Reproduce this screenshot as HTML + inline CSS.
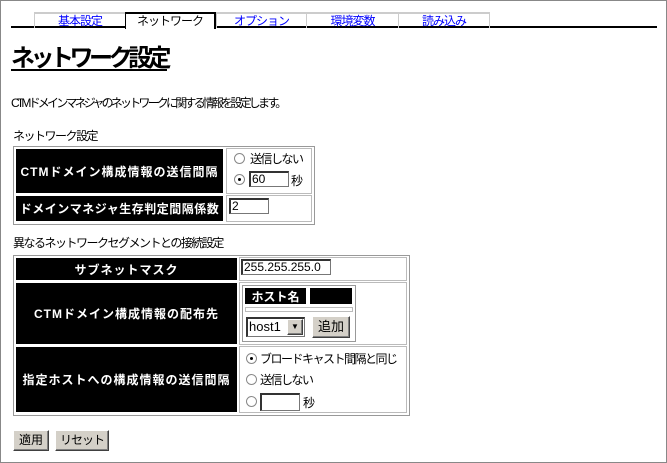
<!DOCTYPE html>
<html><head><meta charset="utf-8"><style>
body{margin:0;width:667px;height:463px;position:relative;background:#fff;font-family:"Liberation Sans","Noto Sans CJK JP",sans-serif;font-size:12px;color:#000;overflow:hidden}
.a{position:absolute}
.frame{left:0;top:0;width:665px;height:461px;border:1px solid #888}
.tab{position:absolute;top:12px;height:14px;border:1px solid #ccc;border-bottom:none;border-top:2px solid #ccc;text-align:center;font-size:12px;line-height:14px;color:#00f;letter-spacing:-1px}
.tab.act{border-top:2px solid #000;border-left:1px solid #000;border-right:2px solid #000;color:#000;height:15px;background:#fff}
.blk{position:absolute;background:#000;color:#fff;font-weight:bold;font-size:12px;display:flex;align-items:center;justify-content:center;white-space:nowrap}
.cell{position:absolute;border:1px solid #bbb}
.tbl{position:absolute;border:1px solid #999}
.inp{position:absolute;height:16px;border:1px solid #777;border-top:2px solid #333;border-left:2px solid #333;background:#fff;box-sizing:border-box;font-size:12px;line-height:13px;padding-left:1px}
.rad{position:absolute;width:9px;height:9px;border:1px solid #888;border-radius:50%;background:#fff}
.rad.on::after{content:"";position:absolute;left:3px;top:3px;width:3px;height:3px;background:#000;border-radius:50%}
.btn{position:absolute;background:#d4d0c8;border:1px solid;border-color:#fff #404040 #404040 #fff;box-shadow:inset -1px -1px #808080;font-size:12px;text-align:center;line-height:18px;box-sizing:border-box}
.t{position:absolute;white-space:nowrap;font-size:12px;line-height:14px;letter-spacing:-1.5px}
</style></head><body>
<div class="a frame"></div>
<div class="a" style="left:11px;top:26px;width:646px;height:2px;background:#000"></div>
<div class="tab" style="left:34px;width:90px">基本設定</div>
<div class="tab act" style="left:125px;width:88px">ネットワーク</div>
<div class="tab" style="left:216px;width:89px">オプション</div>
<div class="tab" style="left:306px;width:91px">環境変数</div>
<div class="tab" style="left:398px;width:90px">読み込み</div>
<div class="t" style="left:11px;top:44px;font-size:24px;line-height:30px;font-weight:bold;letter-spacing:-4.5px;text-decoration:underline;text-underline-offset:3px">ネットワーク設定</div>
<div class="t" style="left:11px;top:96px;letter-spacing:-2.8px">CTMドメインマネジャのネットワークに関する情報を設定します。</div>
<div class="t" style="left:13px;top:129px">ネットワーク設定</div>
<div class="tbl" style="left:13px;top:146px;width:300px;height:77px"></div>
<div class="blk" style="left:16px;top:149px;width:207px;height:44px;letter-spacing:1px">CTMドメイン構成情報の送信間隔</div>
<div class="cell" style="left:226px;top:148px;width:84px;height:44px"></div>
<div class="rad" style="left:234px;top:153px"></div><div class="t" style="left:250px;top:152px">送信しない</div>
<div class="rad on" style="left:234px;top:174px"></div><div class="inp" style="left:249px;top:171px;width:40px">60</div><div class="t" style="left:291px;top:174px">秒</div>
<div class="blk" style="left:16px;top:196px;width:207px;height:25px;letter-spacing:0.5px">ドメインマネジャ生存判定間隔係数</div>
<div class="cell" style="left:226px;top:195px;width:84px;height:25px"></div>
<div class="inp" style="left:229px;top:198px;width:40px">2</div>
<div class="t" style="left:13px;top:236px">異なるネットワークセグメントとの接続設定</div>
<div class="tbl" style="left:13px;top:255px;width:395px;height:159px"></div>
<div class="blk" style="left:16px;top:258px;width:221px;height:22px;letter-spacing:1px">サブネットマスク</div>
<div class="cell" style="left:239px;top:257px;width:166px;height:22px"></div>
<div class="inp" style="left:241px;top:259px;width:90px">255.255.255.0</div>
<div class="blk" style="left:16px;top:283px;width:221px;height:61px;letter-spacing:1px">CTMドメイン構成情報の配布先</div>
<div class="cell" style="left:239px;top:282px;width:166px;height:61px"></div>
<div class="a" style="left:242px;top:285px;width:112px;height:55px;border:1px solid #999"></div>
<div class="blk" style="left:245px;top:288px;width:61px;height:16px">ホスト名</div>
<div class="a" style="left:310px;top:288px;width:42px;height:16px;background:#000"></div>
<div class="a" style="left:245px;top:307px;width:106px;height:3px;border:1px solid #bbb"></div>
<div class="inp" style="left:246px;top:317px;width:59px;height:20px;line-height:16px;font-size:13px">host1</div>
<div class="btn" style="left:287px;top:319px;width:16px;height:16px;font-size:8px;line-height:14px">▼</div>
<div class="btn" style="left:312px;top:316px;width:38px;height:22px;line-height:20px;font-size:13px">追加</div>
<div class="blk" style="left:16px;top:347px;width:221px;height:65px;letter-spacing:1px">指定ホストへの構成情報の送信間隔</div>
<div class="cell" style="left:239px;top:346px;width:166px;height:65px"></div>
<div class="rad on" style="left:246px;top:353px"></div><div class="t" style="left:260px;top:352px;letter-spacing:-1.5px">ブロードキャスト間隔と同じ</div>
<div class="rad" style="left:246px;top:374px"></div><div class="t" style="left:260px;top:373px">送信しない</div>
<div class="rad" style="left:246px;top:396px"></div><div class="inp" style="left:260px;top:393px;width:40px;height:18px"></div><div class="t" style="left:303px;top:396px">秒</div>
<div class="btn" style="left:13px;top:430px;width:36px;height:21px;line-height:19px">適用</div>
<div class="btn" style="left:55px;top:430px;width:54px;height:21px;line-height:19px;letter-spacing:-1px">リセット</div>
</body></html>
